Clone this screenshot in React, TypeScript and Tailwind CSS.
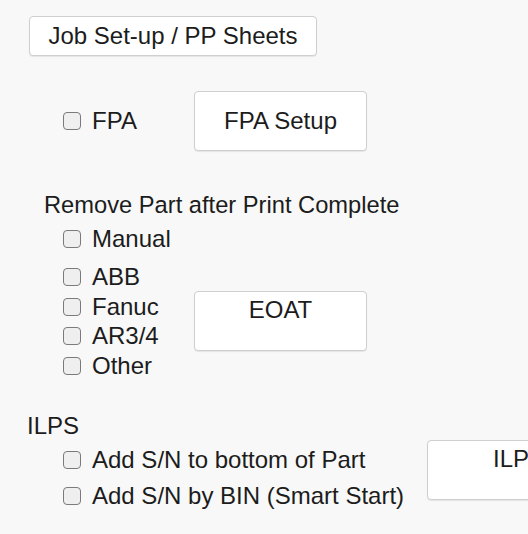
const font = { fontFamily: '"Liberation Sans", Arial, sans-serif' };

function Box() {
  return (
    <span className="inline-block w-[18px] h-[18px] shrink-0 rounded-[4px] border border-[#7a7a7a] bg-[#efefef]" />
  );
}

function Check({ label }: { label: string }) {
  return (
    <label className="flex items-center gap-[11px] whitespace-nowrap">
      <Box />
      <span>{label}</span>
    </label>
  );
}

export default function App() {
  return (
    <div
      className="min-h-screen w-[528px] overflow-hidden bg-[#f8f8f8] text-[24px] leading-[28px] text-[#1c1c1c]"
      style={font}
    >
      <div className="pt-[16px] pl-[29px]">
        <button className="h-[40px] w-[288px] rounded-[4px] border border-[#cfcfcf] bg-white shadow-[0_1px_1px_rgba(0,0,0,0.08)]">
          Job Set-up / PP Sheets
        </button>
      </div>

      {/* FPA */}
      <div className="mt-[35px] flex items-center pl-[63px]">
        <div className="w-[131px]">
          <Check label="FPA" />
        </div>
        <button className="h-[60px] w-[173px] rounded-[4px] border border-[#cfcfcf] bg-white shadow-[0_1px_1px_rgba(0,0,0,0.08)]">
          FPA Setup
        </button>
      </div>

      {/* Remove part */}
      <div className="mt-[40px] pl-[44px] text-[23.7px]">Remove Part after Print Complete</div>
      <div className="mt-[6px] pl-[63px]">
        <Check label="Manual" />
      </div>
      <div className="mt-[10px] flex items-center pl-[63px]">
        <div className="flex w-[131px] flex-col gap-[1.6px]">
          <Check label="ABB" />
          <Check label="Fanuc" />
          <Check label="AR3/4" />
          <Check label="Other" />
        </div>
        <button className="flex h-[60px] w-[173px] items-start justify-center rounded-[4px] border border-[#cfcfcf] bg-white pt-[4px] shadow-[0_1px_1px_rgba(0,0,0,0.08)]">
          EOAT
        </button>
      </div>

      {/* ILPS */}
      <div className="mt-[32px] pl-[27px]">ILPS</div>
      <div className="mt-[0px] flex items-start pl-[63px]">
        <div className="flex w-[364px] shrink-0 flex-col gap-[8px] pt-[6px]">
          <Check label="Add S/N to bottom of Part" />
          <Check label="Add S/N by BIN (Smart Start)" />
        </div>
        <button className="flex h-[60px] w-[184px] shrink-0 items-start justify-center rounded-[4px] border border-[#cfcfcf] bg-white pt-[4px] shadow-[0_1px_1px_rgba(0,0,0,0.08)]">
          ILPS
        </button>
      </div>
    </div>
  );
}
